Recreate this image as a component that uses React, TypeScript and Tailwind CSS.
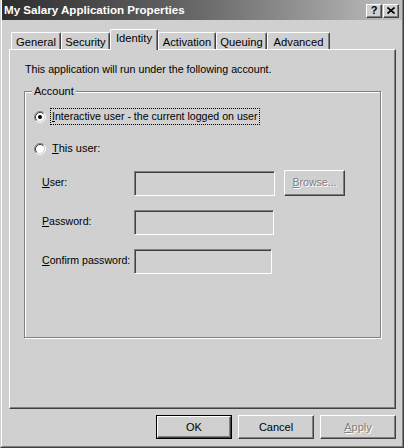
import React, { FC, ReactNode } from "react";

const Radio: FC<{ checked?: boolean }> = ({ checked }) => (
  <svg width="12" height="12" viewBox="0 0 12 12" className="shrink-0">
    <circle cx="6" cy="6" r="4.5" fill="#fff" />
    <path d="M2.11 9.89A5.5 5.5 0 0 1 9.89 2.11" stroke="#808080" fill="none" />
    <path d="M9.89 2.11A5.5 5.5 0 0 1 2.11 9.89" stroke="#fff" fill="none" />
    <path d="M2.82 9.18A4.5 4.5 0 0 1 9.18 2.82" stroke="#404040" fill="none" />
    <path d="M9.18 2.82A4.5 4.5 0 0 1 2.82 9.18" stroke="#d0d0d0" fill="none" />
    {checked && <circle cx="6" cy="6" r="2" fill="#000" />}
  </svg>
);

const Tab: FC<{ label: string; w: string; active?: boolean }> = ({ label, w, active }) => (
  <div
    className={`${w} ${
      active ? "h-[21px] -mb-[1px] relative z-10 pt-[2px]" : "h-[17px] pt-[3px]"
    } bg-[#d0d0d0] border-l border-t border-white border-r border-r-[#404040] rounded-tl-[2px] rounded-tr-[2px] shadow-[inset_-1px_0_0_#808080] flex justify-center text-[11.2px] leading-[13px]`}
  >
    {label}
  </div>
);

const Field: FC<{ w: string }> = ({ w }) => (
  <div
    className={`${w} h-[25px] border border-t-[#808080] border-l-[#808080] border-r-white border-b-white shadow-[inset_1px_1px_0_#404040,inset_-1px_-1px_0_#d0d0d0] bg-[#d0d0d0]`}
  />
);

const Button: FC<{ children: ReactNode; w: string; h: string; def?: boolean; disabled?: boolean }> = ({
  children,
  w,
  h,
  def,
  disabled,
}) => (
  <div className={`${w} ${h} ${def ? "border border-black" : ""}`}>
    <div
      className={`w-full h-full border border-t-white border-l-white border-r-[#404040] border-b-[#404040] shadow-[inset_-1px_-1px_0_#808080] flex items-center justify-center ${
        disabled ? "text-[#808080] [text-shadow:1px_1px_0_#fff]" : "text-black"
      }`}
    >
      {children}
    </div>
  </div>
);

const Row: FC<{ label: ReactNode; children: ReactNode; mt: string }> = ({ label, children, mt }) => (
  <div className={`flex items-center h-[26px] ${mt}`}>
    <div className="w-[92px] pl-[17px] box-content">{label}</div>
    {children}
  </div>
);

export default function App() {
  return (
    <div className="w-[404px] h-[448px] bg-[#d0d0d0] border-l border-r border-b border-l-[#d0d0d0] border-r-[#404040] border-b-[#404040] font-['Liberation_Sans',Arial,sans-serif] text-[10.6px] text-black">
      <div className="h-full flex flex-col border-l border-r border-b border-l-white border-r-[#808080] border-b-[#808080]">
        {/* title bar */}
        <div className="h-[20px] shrink-0 flex items-center justify-between pl-[2px] pr-[3px] bg-gradient-to-r from-[#2e2e2e] via-[#6a6a6a] to-[#c0c0c0]">
          <span className="text-white font-bold text-[11.6px]">My Salary Application Properties</span>
          <div className="flex items-center gap-[1px] mt-[1px]">
            <div className="w-[16px] h-[14px] bg-[#d0d0d0] border border-t-white border-l-white border-r-[#404040] border-b-[#404040] shadow-[inset_-1px_-1px_0_#808080] flex items-center justify-center text-[11px] font-bold leading-none">
              ?
            </div>
            <div className="w-[16px] h-[14px] bg-[#d0d0d0] border border-t-white border-l-white border-r-[#404040] border-b-[#404040] shadow-[inset_-1px_-1px_0_#808080] flex items-center justify-center">
              <svg width="8" height="7" viewBox="0 0 8 7">
                <path d="M0.5 0.5L7.5 6.5M7.5 0.5L0.5 6.5" stroke="#000" strokeWidth="1.7" />
              </svg>
            </div>
          </div>
        </div>

        {/* tabs */}
        <div className="mt-[9px] ml-[9px] h-[20px] flex items-end shrink-0">
          <Tab label="General" w="w-[50px]" />
          <Tab label="Security" w="w-[49px]" />
          <Tab label="Identity" w="w-[48px]" active />
          <Tab label="Activation" w="w-[58px]" />
          <Tab label="Queuing" w="w-[51px]" />
          <Tab label="Advanced" w="w-[63px]" />
        </div>

        {/* panel */}
        <div className="ml-[7px] w-[387px] h-[360px] shrink-0 border-l border-t border-white border-r border-b border-r-[#404040] border-b-[#404040] shadow-[inset_-1px_-1px_0_#808080]">
          <p className="mt-[13px] ml-[15px] leading-[13px] text-[10.7px]">This application will run under the following account.</p>

          <div className="relative mt-[15px] ml-[14px] w-[357px] h-[247px] border border-[#808080] shadow-[inset_1px_1px_0_#fff,1px_1px_0_#fff]">
            <span className="absolute -top-[7px] left-[7px] px-[2px] bg-[#d0d0d0] leading-[13px] text-[11px]">Account</span>

            <div className="mt-[16px] ml-[9px] flex items-center h-[17px]">
              <Radio checked />
              <span className="ml-[4px] px-[1px] h-[17px] flex items-center border border-dotted border-black text-[10.6px]">
                <span>
                  <u>I</u>nteractive user - the current logged on user
                </span>
              </span>
            </div>

            <div className="mt-[15px] ml-[9px] flex items-center h-[17px]">
              <Radio />
              <span className="ml-[6px] text-[11px]">
                <u>T</u>his user:
              </span>
            </div>

            <Row mt="mt-[13px]" label={<><u>U</u>ser:</>}>
              <Field w="w-[141px]" />
              <div className="ml-[9px]">
                <Button w="w-[61px]" h="h-[26px]" disabled>
                  <span>
                    <u>B</u>rowse...
                  </span>
                </Button>
              </div>
            </Row>
            <Row mt="mt-[13px]" label={<><u>P</u>assword:</>}>
              <Field w="w-[140px]" />
            </Row>
            <Row mt="mt-[13px]" label={<><u>C</u>onfirm password:</>}>
              <Field w="w-[138px]" />
            </Row>
          </div>
        </div>

        {/* buttons */}
        <div className="mt-[6px] pr-[6px] flex justify-end gap-[6px] text-[11px]">
          <Button w="w-[76px]" h="h-[24px]" def>
            OK
          </Button>
          <Button w="w-[76px]" h="h-[24px]">
            Cancel
          </Button>
          <Button w="w-[76px]" h="h-[24px]" disabled>
            <span>
              <u>A</u>pply
            </span>
          </Button>
        </div>
      </div>
    </div>
  );
}
